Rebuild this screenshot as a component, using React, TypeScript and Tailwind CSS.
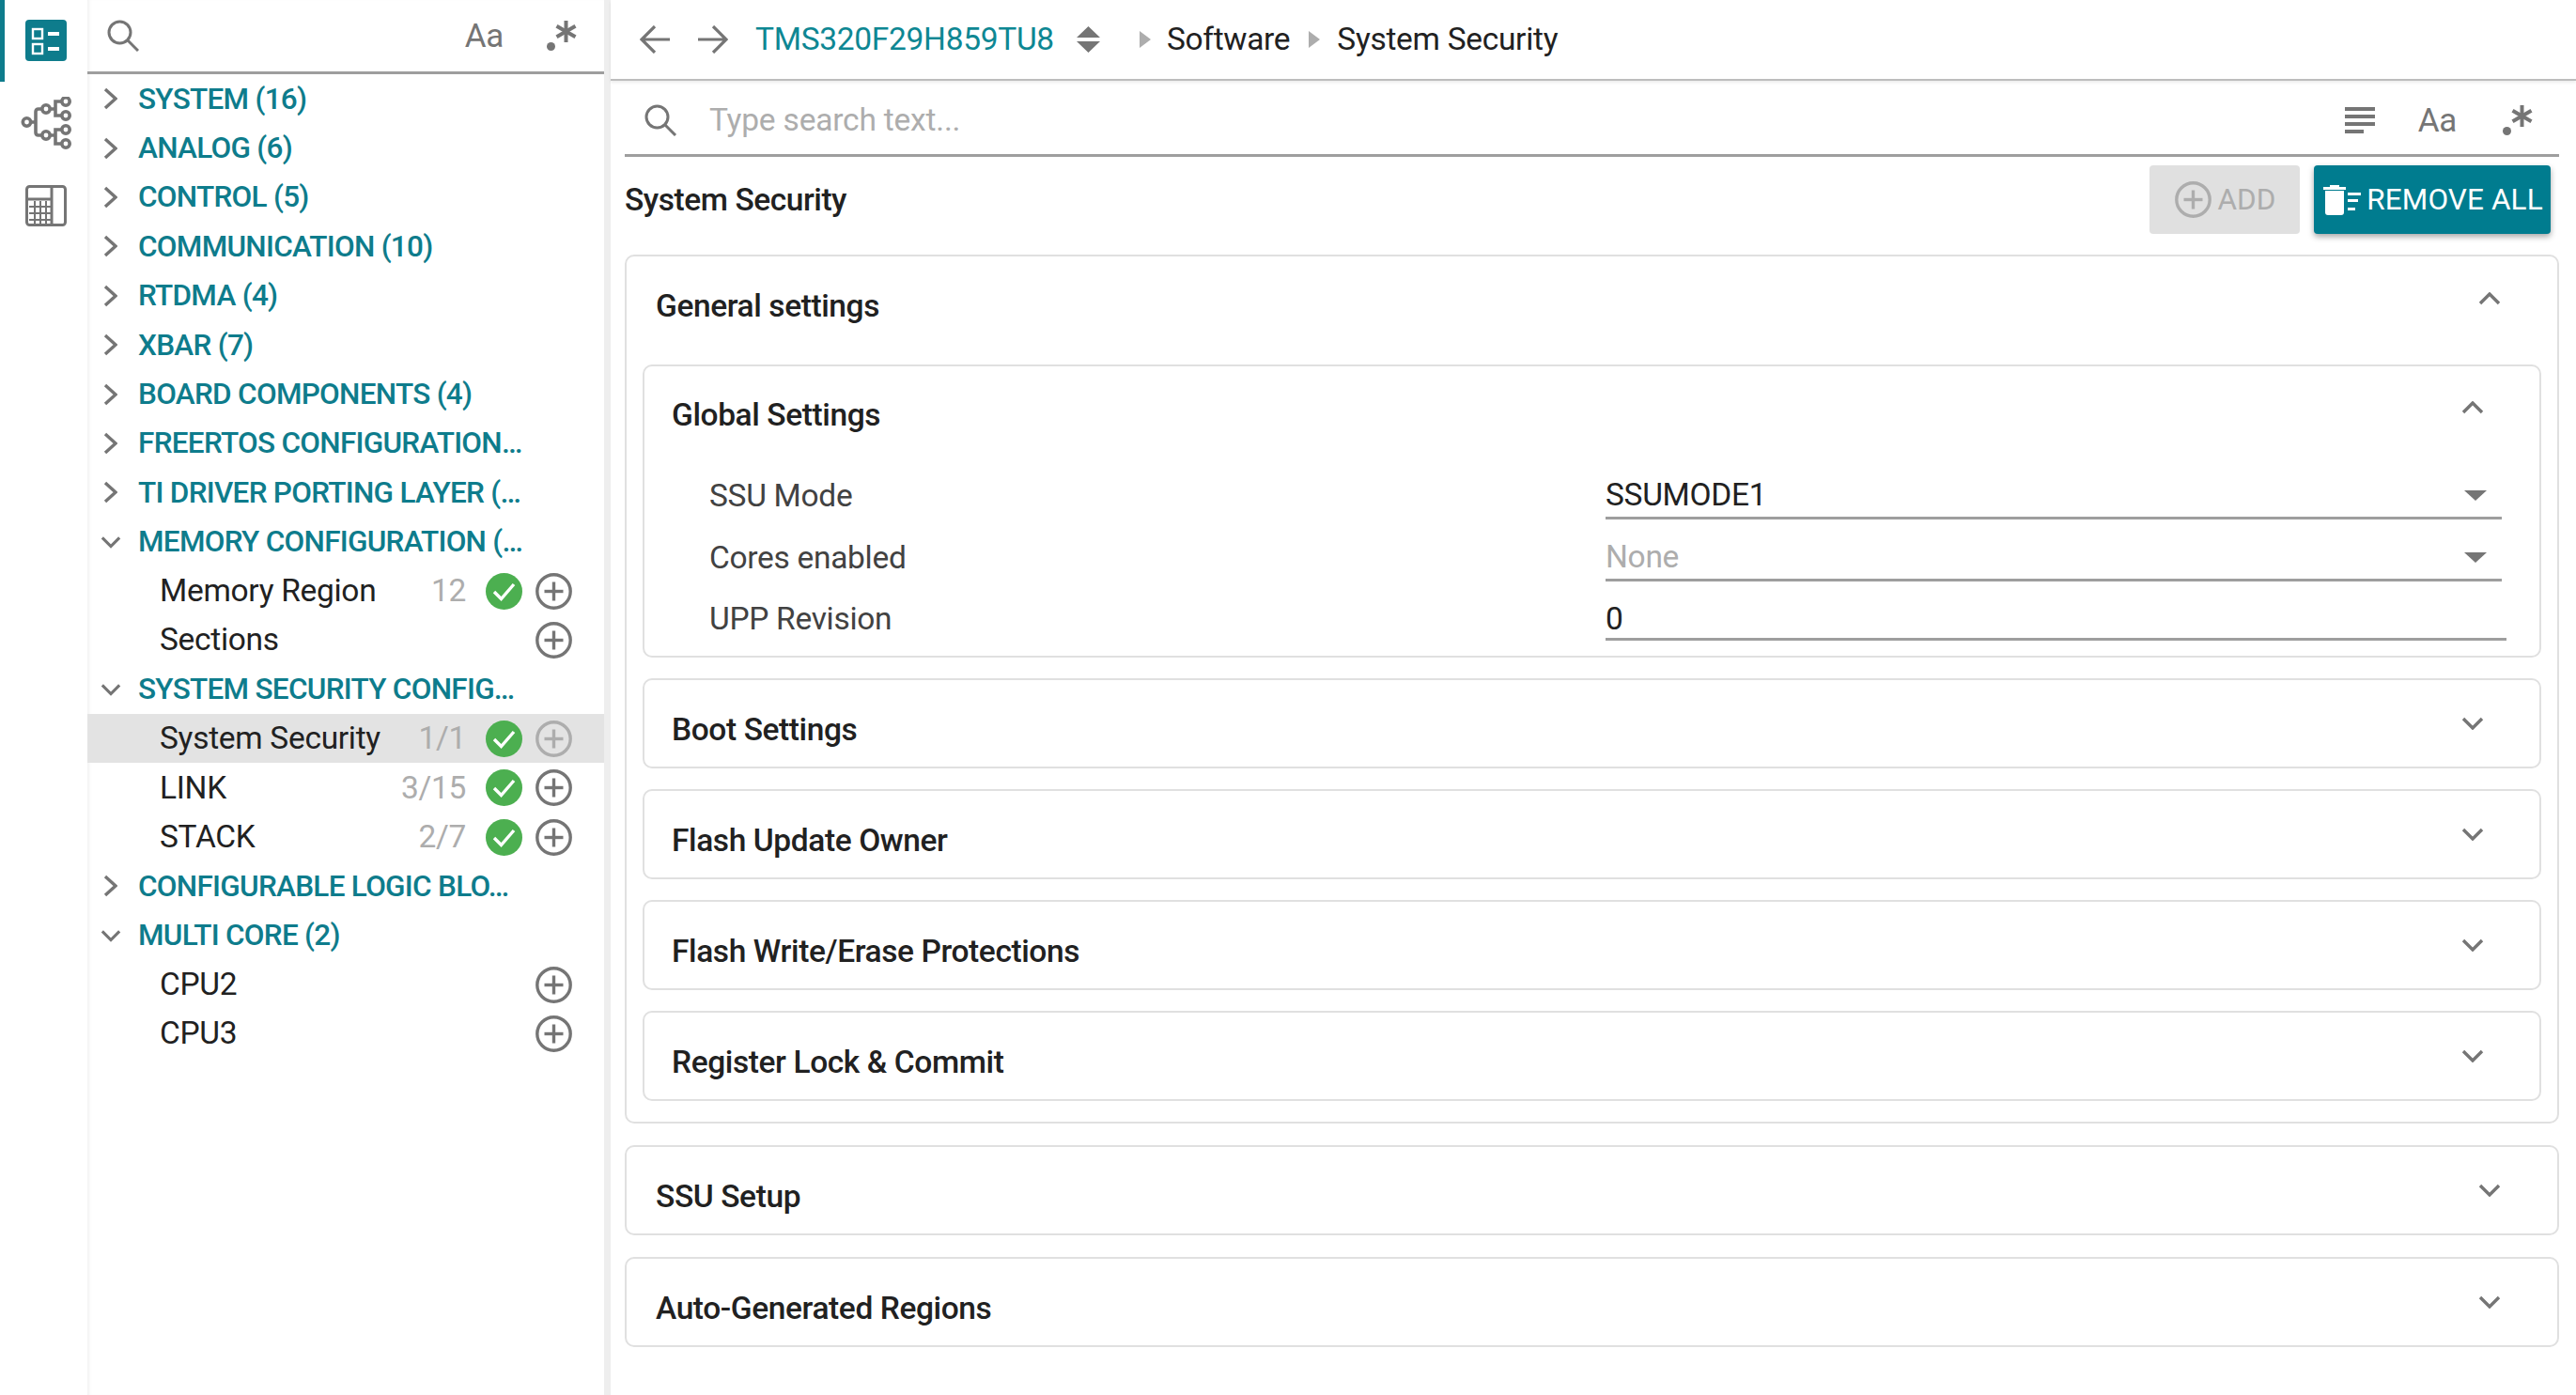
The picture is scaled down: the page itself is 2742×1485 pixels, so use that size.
function Chevron({ dir, className }: { dir: "up" | "down" | "right"; className: string }) {
  const points = dir === "up" ? "2,12 12,2 22,12" : dir === "down" ? "2,2 12,12 22,2" : "2,2 13,12 2,22";
  const box = dir === "right" ? "0 0 15 24" : "0 0 24 14";
  return (
    <svg viewBox={box} className={className} fill="none" stroke="#757575" strokeWidth="3.4">
      <polyline points={points} />
    </svg>
  );
}

function SearchIcon({ className }: { className: string }) {
  return (
    <svg viewBox="0 0 34 34" className={className} fill="none" stroke="#757575" strokeWidth="3">
      <circle cx="13.5" cy="13.5" r="11.5" />
      <line x1="22" y1="22" x2="33" y2="33" />
    </svg>
  );
}

function RegexIcon() {
  return (
    <svg viewBox="0 0 32 32" className="h-8 w-8" fill="none" stroke="#757575" strokeWidth="4">
      <circle cx="4.5" cy="27.5" r="4.5" fill="#757575" stroke="none" />
      <line x1="20.5" y1="0" x2="20.5" y2="23" />
      <line x1="10.5" y1="5.7" x2="30.5" y2="17.3" />
      <line x1="30.5" y1="5.7" x2="10.5" y2="17.3" />
    </svg>
  );
}

function MatchCase() {
  return <span className="text-[35px] leading-none text-[#757575]">Aa</span>;
}

function CheckBadge() {
  return (
    <svg viewBox="0 0 39 39" className="h-[39px] w-[39px]">
      <circle cx="19.5" cy="19.5" r="19.5" fill="#4caf50" />
      <polyline points="9,20 16.5,27.5 30,12" fill="none" stroke="white" strokeWidth="3.4" />
    </svg>
  );
}

function PlusCircle({ muted }: { muted?: boolean }) {
  return (
    <svg viewBox="0 0 39 39" className="h-[39px] w-[39px]" fill="none" stroke={muted ? "#adadad" : "#757575"} strokeWidth="3.4">
      <circle cx="19.5" cy="19.5" r="17.7" />
      <line x1="19.5" y1="9.5" x2="19.5" y2="29.5" />
      <line x1="9.5" y1="19.5" x2="29.5" y2="19.5" />
    </svg>
  );
}

function RailIcons() {
  return (
    <div className="relative flex h-full w-[93px] shrink-0 flex-col items-center pl-[5px]">
      <div className="absolute left-0 top-0 h-[87px] w-[5px] bg-[#0e7c8c]" />
      <svg viewBox="0 0 44 44" className="mt-[21px] h-[44px] w-[44px]">
        <rect width="44" height="44" rx="4" fill="#0e7c8c" />
        <g fill="none" stroke="white" strokeWidth="2.4">
          <rect x="8" y="10" width="10" height="10" />
          <rect x="8" y="26" width="10" height="10" />
        </g>
        <rect x="24" y="13" width="12" height="4" fill="white" />
        <rect x="24" y="29" width="12" height="4" fill="white" />
      </svg>
      <svg viewBox="0 0 54 56" className="mt-[38px] h-[56px] w-[54px]" fill="none" stroke="#757575" strokeWidth="3.6">
        <circle cx="6.5" cy="27" r="4.2" />
        <path d="M11 27 H16 V16 Q16 13 19 13 H22 M16 27 V38 Q16 41 19 41 H22" />
        <circle cx="27" cy="13" r="4.2" />
        <circle cx="27" cy="41" r="4.2" />
        <circle cx="48" cy="5" r="4.2" />
        <circle cx="48" cy="20" r="4.2" />
        <circle cx="48" cy="35" r="4.2" />
        <circle cx="48" cy="50" r="4.2" />
        <path d="M32 13 H37 V5 H43 M37 13 V20 H43 M32 41 H37 V35 H43 M37 41 V50 H43" />
      </svg>
      <svg viewBox="0 0 44 44" className="mt-[38px] h-[44px] w-[44px]" fill="none" stroke="#757575" strokeWidth="3">
        <rect x="1.5" y="1.5" width="41" height="41" rx="3" />
        <path d="M28 2 V42 M2 15 H28" />
        <path d="M4 23 H28 M4 30 H28 M4 37 H28 M10 17 V42 M16 17 V42 M22 17 V42" strokeWidth="2" />
      </svg>
    </div>
  );
}

type TreeRow = { label: string; open?: boolean; count?: string; ok?: boolean; plus?: boolean; active?: boolean };

const rows: TreeRow[] = [
  { label: "SYSTEM (16)" },
  { label: "ANALOG (6)" },
  { label: "CONTROL (5)" },
  { label: "COMMUNICATION (10)" },
  { label: "RTDMA (4)" },
  { label: "XBAR (7)" },
  { label: "BOARD COMPONENTS (4)" },
  { label: "FREERTOS CONFIGURATION…" },
  { label: "TI DRIVER PORTING LAYER (…" },
  { label: "MEMORY CONFIGURATION (…", open: true },
  { label: "Memory Region", count: "12", ok: true, plus: true },
  { label: "Sections", plus: true },
  { label: "SYSTEM SECURITY CONFIG…", open: true },
  { label: "System Security", count: "1/1", ok: true, plus: true, active: true },
  { label: "LINK", count: "3/15", ok: true, plus: true },
  { label: "STACK", count: "2/7", ok: true, plus: true },
  { label: "CONFIGURABLE LOGIC BLO…" },
  { label: "MULTI CORE (2)", open: true },
  { label: "CPU2", plus: true },
  { label: "CPU3", plus: true },
];

function Tree() {
  return (
    <div>
      {rows.map((row) =>
        row.plus ? (
          <div key={row.label} className={`flex h-[52.4px] items-center pl-[77px] pr-[34px] ${row.active ? "bg-[#e3e3e3]" : ""}`}>
            <span className="flex-1 text-[33.5px] text-[#212121]">{row.label}</span>
            {row.count && <span className="mr-[21px] text-[33.5px] text-[#adadad]">{row.count}</span>}
            {row.ok && <span className="mr-[14px] flex"><CheckBadge /></span>}
            <span className="flex"><PlusCircle muted={row.active} /></span>
          </div>
        ) : (
          <div key={row.label} className="flex h-[52.4px] items-center">
            <span className="flex w-[54px] justify-center pr-[5px]">
              {row.open ? (
                <Chevron dir="down" className="h-[14px] w-[22px]" />
              ) : (
                <Chevron dir="right" className="h-[24px] w-[15px]" />
              )}
            </span>
            <span className="whitespace-nowrap text-[31.5px] font-medium tracking-[-0.72px] text-[#0e7c8c]">{row.label}</span>
          </div>
        ),
      )}
    </div>
  );
}

function Sidebar() {
  return (
    <aside className="h-full w-[550px] shrink-0 shadow-[inset_4px_0_4px_-3px_rgba(0,0,0,0.08)]">
      <div className="flex h-[79px] items-center border-b-[3px] border-[#9e9e9e] pl-[21px] pr-[29px]">
        <SearchIcon className="h-[34px] w-[34px]" />
        <span className="ml-auto mr-[46px] flex"><MatchCase /></span>
        <RegexIcon />
      </div>
      <Tree />
    </aside>
  );
}

function TopBar() {
  return (
    <header className="flex h-[86px] items-center border-b-[2px] border-[#bdbdbd] pl-[31px] shadow-[0_2px_3px_rgba(0,0,0,0.08)]">
      <svg viewBox="0 0 32 30" className="h-[30px] w-[32px]" fill="none" stroke="#757575" strokeWidth="3.2">
        <path d="M32 15 H3 M16 1 L2 15 L16 29" />
      </svg>
      <svg viewBox="0 0 32 30" className="ml-[30px] h-[30px] w-[32px]" fill="none" stroke="#757575" strokeWidth="3.2">
        <path d="M0 15 H29 M16 1 L30 15 L16 29" />
      </svg>
      <span className="ml-[29px] text-[33.5px] text-[#0e8793]">TMS320F29H859TU8</span>
      <svg viewBox="0 0 25 28" className="ml-[24px] h-[28px] w-[25px]" fill="#757575">
        <path d="M12.5 0 L25 12 H0 Z M12.5 28 L0 16 H25 Z" />
      </svg>
      <svg viewBox="0 0 12 18" className="ml-[42px] h-[18px] w-[12px]" fill="#adadad">
        <path d="M0 0 L12 9 L0 18 Z" />
      </svg>
      <span className="ml-[17px] text-[33.5px] text-[#212121]">Software</span>
      <svg viewBox="0 0 12 18" className="ml-[20px] h-[18px] w-[12px]" fill="#adadad">
        <path d="M0 0 L12 9 L0 18 Z" />
      </svg>
      <span className="ml-[18px] text-[33.5px] text-[#212121]">System Security</span>
    </header>
  );
}

function SearchBar() {
  return (
    <div className="ml-[15px] mr-[18px] flex h-[81px] items-center border-b-[3px] border-[#9e9e9e] pl-[20px] pr-[28px] pt-[6px]">
      <SearchIcon className="h-[34px] w-[36px]" />
      <span className="ml-[34px] flex-1 text-[33.5px] tracking-[-0.2px] text-[#adadad]">Type search text...</span>
      <svg viewBox="0 0 32 28" className="mr-[46px] h-[28px] w-[32px]" fill="#757575">
        <rect y="0" width="32" height="4" />
        <rect y="8" width="32" height="4" />
        <rect y="16" width="32" height="4" />
        <rect y="24" width="20" height="4" />
      </svg>
      <span className="mr-[49px] flex"><MatchCase /></span>
      <RegexIcon />
    </div>
  );
}

function ActionRow() {
  return (
    <div className="ml-[15px] mr-[27px] mt-[9px] flex h-[73px] items-center">
      <h1 className="flex-1 pt-[2px] text-[33.5px] font-medium tracking-[-0.45px] text-[#212121]">System Security</h1>
      <button className="flex h-[73px] w-[160px] items-center justify-center gap-[6px] rounded-[4px] bg-[#e0e0e0] pl-[2px] text-[31.5px] tracking-[0.1px] text-[#adadad]">
        <PlusCircle muted />
        ADD
      </button>
      <button className="ml-[15px] flex h-[73px] w-[252px] items-center justify-center gap-[6px] rounded-[4px] bg-[#007c8f] pl-[2px] text-[31.5px] tracking-[0.1px] text-white shadow-[0_3px_6px_rgba(0,0,0,0.35)]">
        <svg viewBox="0 0 40 32" className="h-[32px] w-[40px]" fill="white">
          <rect x="0" y="2" width="24" height="3" />
          <rect x="7" y="0" width="10" height="3" />
          <path d="M2 6 H22 V29 Q22 32 19 32 H5 Q2 32 2 29 Z" />
          <rect x="26" y="8" width="14" height="3" />
          <rect x="26" y="15" width="11" height="3" />
          <rect x="26" y="24" width="8" height="3" />
        </svg>
        REMOVE ALL
      </button>
    </div>
  );
}

function Card({ title, x }: { title: string; x: string }) {
  return (
    <section className="rounded-[10px] border-2 border-[#e0e0e0]">
      <div className={`flex h-[92px] items-center justify-between ${x}`}>
        <h2 className="pt-[14px] text-[33.5px] font-medium tracking-[-0.4px] text-[#212121]">{title}</h2>
        <Chevron dir="down" className="h-[14px] w-[24px]" />
      </div>
    </section>
  );
}

function Field({ label, value, kind }: { label: string; value: string; kind: "select" | "disabled" | "input" }) {
  const isInput = kind === "input";
  return (
    <div className={`flex items-center ${isInput ? "h-[63px]" : "h-[66px]"}`}>
      <span className="w-[954px] shrink-0 pt-[17px] text-[33.5px] text-[#424242]">{label}</span>
      <div className={`flex h-full items-center border-b-[3px] border-[#9e9e9e] ${isInput ? "w-[959px] pt-[20px]" : "w-[954px] pr-[16px] pt-[17px]"}`}>
        <span className={`flex-1 text-[33.5px] ${kind === "disabled" ? "text-[#adadad]" : "text-[#212121]"}`}>{value}</span>
        {!isInput && (
          <svg viewBox="0 0 24 11" className="h-[11px] w-[24px]" fill="#757575">
            <path d="M0 0 H24 L12 11 Z" />
          </svg>
        )}
      </div>
    </div>
  );
}

function Content() {
  const inner = ["Boot Settings", "Flash Update Owner", "Flash Write/Erase Protections", "Register Lock & Commit"];
  return (
    <div className="ml-[15px] mr-[18px] mt-[22px] flex flex-col gap-[23px]">
      <section className="rounded-[10px] border-2 border-[#e0e0e0] pb-[22px]">
        <div className="flex h-[115px] items-center justify-between pb-[9px] pl-[31px] pr-[60px]">
          <h2 className="text-[33.5px] font-medium tracking-[-0.4px] text-[#212121]">General settings</h2>
          <Chevron dir="up" className="mb-[17px] h-[14px] w-[24px]" />
        </div>
        <div className="mx-[17px] flex flex-col gap-[22px]">
          <section className="h-[312px] rounded-[10px] border-2 border-[#e0e0e0]">
            <div className="flex h-[97px] items-center justify-between pl-[29px] pr-[59px]">
              <h2 className="pt-[7px] text-[33.5px] font-medium tracking-[-0.4px] text-[#212121]">Global Settings</h2>
              <Chevron dir="up" className="mb-[9px] h-[14px] w-[24px]" />
            </div>
            <div className="pl-[69px]">
              <Field label="SSU Mode" value="SSUMODE1" kind="select" />
              <Field label="Cores enabled" value="None" kind="disabled" />
              <Field label="UPP Revision" value="0" kind="input" />
            </div>
          </section>
          {inner.map((title) => (
            <Card key={title} title={title} x="pl-[29px] pr-[59px]" />
          ))}
        </div>
      </section>
      <Card title="SSU Setup" x="pl-[31px] pr-[60px]" />
      <Card title="Auto-Generated Regions" x="pl-[31px] pr-[60px]" />
    </div>
  );
}

export default function App() {
  return (
    <div className="flex h-[1485px] w-[2742px] overflow-hidden bg-white font-['Roboto',sans-serif] tracking-[-0.3px]">
      <RailIcons />
      <Sidebar />
      <div className="w-[7px] shrink-0 bg-[#eeeeee]" />
      <main className="min-w-0 flex-1">
        <TopBar />
        <SearchBar />
        <ActionRow />
        <Content />
      </main>
    </div>
  );
}
